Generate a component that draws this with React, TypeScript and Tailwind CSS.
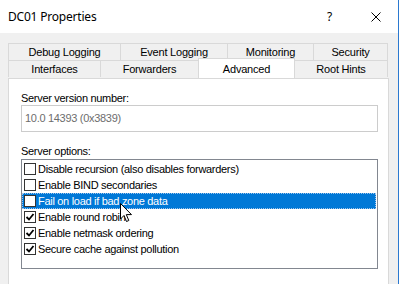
import React from "react";

const font = { fontFamily: '"Liberation Sans", Arial, sans-serif' };

function Check({ checked }: { checked: boolean }) {
  return (
    <div className="w-[12px] h-[12px] border border-[#333333] bg-white flex items-center justify-center shrink-0">
      {checked && (
        <svg width="10" height="10" viewBox="0 0 10 10">
          <path d="M1.5 5 L4 7.5 L8.5 2" fill="none" stroke="#000" strokeWidth="1.8" />
        </svg>
      )}
    </div>
  );
}

const options: { label: string; checked: boolean; selected?: boolean }[] = [
  { label: "Disable recursion (also disables forwarders)", checked: false },
  { label: "Enable BIND secondaries", checked: false },
  { label: "Fail on load if bad zone data", checked: false, selected: true },
  { label: "Enable round robin", checked: true },
  { label: "Enable netmask ordering", checked: true },
  { label: "Secure cache against pollution", checked: true },
];

function Tab({ w, label, last }: { w: string; label: string; last?: boolean }) {
  return (
    <div
      className={`${w} h-[17px] border-t border-l ${last ? "border-r" : ""} border-[#d9d9d9] flex items-center justify-center text-[11px] tracking-[-0.2px] text-black`}
    >
      {label}
    </div>
  );
}

export default function App() {
  return (
    <div
      className="w-[399px] h-[284px] overflow-hidden bg-[#f0f0f0] border-r border-[#2b79d0] relative"
      style={font}
    >
      {/* Title bar */}
      <div className="h-[33px] bg-white flex items-center relative">
        <span
          className="pl-[8px] text-[12px] text-black tracking-[-0.2px]"
          style={{ fontFamily: '"Noto Sans", "Open Sans", sans-serif' }}
        >
          DC01 Properties
        </span>
        <span
          className="absolute left-[327px] top-[8px] text-[12px] text-black"
          style={{ fontFamily: '"Noto Sans", sans-serif' }}
        >
          ?
        </span>
        <svg className="absolute left-[371px] top-[12px]" width="10" height="10" viewBox="0 0 10 10">
          <path d="M0.5 0.5 L9.5 9.5 M9.5 0.5 L0.5 9.5" stroke="#000" strokeWidth="1" />
        </svg>
      </div>

      {/* Tabs */}
      <div className="pt-[10px] pl-[8px]">
        <div className="flex">
          <Tab w="w-[112px]" label="Debug Logging" />
          <Tab w="w-[107px]" label="Event Logging" />
          <Tab w="w-[86px]" label="Monitoring" />
          <Tab w="w-[75px]" label="Security" last />
        </div>
        <div className="flex">
          <div className="w-[92px] h-[17px] border-t border-l border-[#d9d9d9] flex items-center justify-center text-[11px] tracking-[-0.2px] pt-[1px]">
            Interfaces
          </div>
          <div className="w-[98px] h-[17px] border-t border-l border-[#d9d9d9] flex items-center justify-center text-[11px] tracking-[-0.2px] pt-[1px]">
            Forwarders
          </div>
          <div className="w-[97px] h-[20px] -mt-[2px] border-t border-l border-r border-[#d9d9d9] bg-white relative z-10 flex items-start justify-center pt-[2px] text-[11px] tracking-[-0.2px]">
            Advanced
          </div>
          <div className="w-[93px] h-[17px] border-t border-r border-[#d9d9d9] flex items-center justify-center text-[11px] tracking-[-0.2px] pt-[1px]">
            Root Hints
          </div>
        </div>
      </div>

      {/* Panel */}
      <div className="ml-[8px] w-[381px] h-[220px] bg-white border border-[#d9d9d9] pl-[12px] pt-[12px]">
        <div className="text-[11px] tracking-[-0.3px] leading-[14px] text-black">Server version number:</div>
        <div className="mt-[0px] w-[357px] h-[27px] border border-[#cccccc] bg-white flex items-center pl-[3px] text-[11px] tracking-[-0.3px] text-[#6d6d6d]">
          10.0 14393 (0x3839)
        </div>
        <div className="mt-[12px] text-[11px] tracking-[-0.3px] leading-[14px] text-black">Server options:</div>
        <div className="mt-[1px] w-[357px] h-[110px] border border-[#828790] bg-white pt-[1px] relative">
          {options.map((o) => (
            <div
              key={o.label}
              className={`h-[16px] flex items-center gap-[1px] pl-[2px] mr-[1px] text-[11px] tracking-[-0.3px] ${
                o.selected
                  ? "bg-[#0078d7] text-white outline-1 outline-dotted outline-[#9fc4ea] -outline-offset-1"
                  : "text-black"
              }`}
            >
              <Check checked={o.checked} />
              <span className="ml-[1px]">{o.label}</span>
            </div>
          ))}
          <svg
            className="absolute left-[98px] top-[43px] z-20"
            width="13"
            height="20"
            viewBox="0 0 13 20"
          >
            <path
              d="M0.5 0.5 L0.5 16 L4 12.5 L6.5 18.5 L8.8 17.5 L6.3 11.6 L11.5 11.6 Z"
              fill="#fff"
              stroke="#000"
              strokeWidth="1"
              strokeLinejoin="miter"
            />
          </svg>
        </div>
        <div className="mt-[15px] ml-[160px] w-[197px] h-[20px] border border-[#adadad] bg-[#e1e1e1]" />
      </div>
    </div>
  );
}
